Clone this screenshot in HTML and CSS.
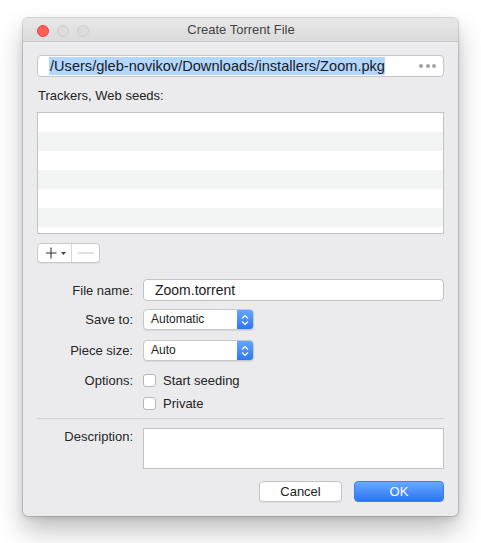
FILE: index.html
```html
<!DOCTYPE html>
<html>
<head>
<meta charset="utf-8">
<link rel="stylesheet" href="styles.css">
</head>
<body>
<div class="window">
  <div class="titlebar">
    <div class="lights">
      <span class="light red"></span>
      <span class="light"></span>
      <span class="light"></span>
    </div>
    <div class="title">Create Torrent File</div>
  </div>
  <div class="content">
    <div class="pathfield">
      <span class="sel">/Users/gleb-novikov/Downloads/installers/Zoom.pkg</span>
      <span class="dots"><i></i><i></i><i></i></span>
    </div>
    <div class="section-label">Trackers, Web seeds:</div>
    <div class="list">
      <div class="row"></div><div class="row alt"></div>
      <div class="row"></div><div class="row alt"></div>
      <div class="row"></div><div class="row alt"></div>
      <div class="row"></div>
    </div>
    <div class="segbtn">
      <span class="seg plus">
        <svg width="14" height="12" viewBox="0 0 14 12"><path d="M5 0.5V11.5M0 6H10.5" stroke="#333" stroke-width="1.1" fill="none"/></svg>
        <svg width="5" height="3" viewBox="0 0 5 3" class="tri"><path d="M0 0H5L2.5 3Z" fill="#444"/></svg>
      </span>
      <span class="seg minus">
        <svg width="16" height="2" viewBox="0 0 16 2"><path d="M0 1H16" stroke="#c4c4c4" stroke-width="1"/></svg>
      </span>
    </div>

    <div class="form">
      <div class="frow r-name">
        <label class="lbl">File name:</label>
        <div class="textfield">Zoom.torrent</div>
      </div>
      <div class="frow r-save">
        <label class="lbl">Save to:</label>
        <div class="popup"><span class="ptext">Automatic</span><span class="pbtn"><svg width="8" height="12" viewBox="0 0 8 12"><path d="M1 4.5L4 1.5L7 4.5M1 7.5L4 10.5L7 7.5" stroke="#fff" stroke-width="1.2" fill="none"/></svg></span></div>
      </div>
      <div class="frow r-piece">
        <label class="lbl">Piece size:</label>
        <div class="popup"><span class="ptext">Auto</span><span class="pbtn"><svg width="8" height="12" viewBox="0 0 8 12"><path d="M1 4.5L4 1.5L7 4.5M1 7.5L4 10.5L7 7.5" stroke="#fff" stroke-width="1.2" fill="none"/></svg></span></div>
      </div>
      <div class="frow r-opt">
        <label class="lbl">Options:</label>
        <div class="check"><span class="box"></span><span>Start seeding</span></div>
      </div>
      <div class="frow r-priv">
        <span class="lbl"></span>
        <div class="check"><span class="box"></span><span>Private</span></div>
      </div>
      <div class="sep"></div>
      <div class="frow r-desc">
        <label class="lbl desc-lbl">Description:</label>
        <div class="textarea"></div>
      </div>
    </div>

    <div class="buttons">
      <button class="btn cancel">Cancel</button>
      <button class="btn ok">OK</button>
    </div>
  </div>
</div>
</body>
</html>
```
FILE: styles.css
```css
html, body {
  margin: 0;
  padding: 0;
  background: #ffffff;
}
body {
  font-family: "Liberation Sans", Arial, sans-serif;
  font-size: 13px;
  color: #222222;
  padding: 18px 0 30px 23px;
}
.window {
  width: 435px;
  height: 498px;
  box-sizing: border-box;
  background: #ebebed;
  border-radius: 5px;
  box-shadow: 0 0 0 1px rgba(0,0,0,0.13), 0 14px 26px rgba(0,0,0,0.26), 0 2px 6px rgba(0,0,0,0.1);
  overflow: hidden;
  display: flex;
  flex-direction: column;
}
.titlebar {
  height: 24px;
  box-sizing: border-box;
  background: linear-gradient(#e9e8e9, #dcdbdc);
  border-bottom: 1px solid #c9c9c9;
  display: flex;
  align-items: center;
  position: relative;
}
.lights {
  display: flex;
  gap: 8px;
  padding-left: 14px;
  position: absolute;
  left: 0;
  top: 7px;
}
.light {
  width: 12px;
  height: 12px;
  box-sizing: border-box;
  border-radius: 50%;
  border: 1px solid #d0d0d0;
  background: #dcdcdc;
}
.light.red {
  background: #fd5e57;
  border-color: #e64a43;
}
.title {
  flex: 1;
  text-align: center;
  color: #444;
  padding-left: 1px;
  line-height: 23px;
}
.content {
  padding: 13px 14px 0 14px;
  display: flex;
  flex-direction: column;
}
.pathfield {
  height: 22px;
  box-sizing: border-box;
  background: #fff;
  border: 1px solid #c5c5c7;
  border-radius: 4px;
  display: flex;
  align-items: center;
  padding-left: 11px;
  padding-right: 7px;
}
.sel {
  background: #b3d7ff;
  line-height: 18px;
  font-size: 14.6px;
  padding: 0 0 0 1px;
  color: #1a1a1a;
}
.dots {
  margin-left: auto;
  display: flex;
  gap: 2.5px;
}
.dots i {
  width: 4px;
  height: 4px;
  border-radius: 50%;
  background: #a3a3a3;
}
.section-label {
  margin-top: 11px;
  line-height: 16px;
  padding-left: 1px;
}
.list {
  margin-top: 8px;
  height: 122px;
  box-sizing: border-box;
  border: 1px solid #c2c2c2;
  background: #fff;
  overflow: hidden;
}
.row {
  height: 19px;
  background: #ffffff;
}
.row.alt {
  background: #f3f4f4;
}
.segbtn {
  margin-top: 9px;
  width: 63px;
  height: 20px;
  box-sizing: border-box;
  display: flex;
  background: #fff;
  border: 1px solid #c9c9c9;
  border-radius: 4px;
  box-shadow: 0 1px 0 rgba(0,0,0,0.05);
}
.seg {
  display: flex;
  align-items: center;
  justify-content: center;
}
.seg.plus {
  width: 34px;
  border-right: 1px solid #d6d6d6;
  gap: 1px;
  padding-left: 2px;
  box-sizing: border-box;
}
.seg.plus .tri {
  margin-top: 1px;
}
.seg.minus {
  flex: 1;
}
.form {
  margin-top: 16px;
  display: flex;
  flex-direction: column;
}
.frow {
  display: flex;
  align-items: center;
}
.lbl {
  width: 96px;
  text-align: right;
  margin-right: 10px;
  flex-shrink: 0;
  color: #262626;
}
.textfield {
  flex: 1;
  height: 22px;
  box-sizing: border-box;
  background: #fff;
  border: 1px solid #c2c2c4;
  border-radius: 4px;
  padding-left: 11px;
  line-height: 20px;
  font-size: 14px;
  color: #1a1a1a;
}
.r-save { margin-top: 8px; }
.r-piece { margin-top: 10px; }
.popup {
  width: 111px;
  height: 21px;
  box-sizing: border-box;
  display: flex;
  background: #fff;
  border: 1px solid #c8c8c8;
  border-radius: 4px;
  overflow: hidden;
  box-shadow: 0 1px 1px rgba(0,0,0,0.08);
}
.ptext {
  flex: 1;
  padding-left: 7px;
  line-height: 19px;
  font-size: 12px;
  color: #222;
}
.pbtn {
  width: 16px;
  background: linear-gradient(#64a7fd, #2e76f7);
  display: flex;
  align-items: center;
  justify-content: center;
}
.r-opt { margin-top: 10px; height: 19px; }
.r-priv { margin-top: 4px; height: 19px; }
.check {
  display: flex;
  align-items: center;
  gap: 7px;
}
.box {
  width: 13px;
  height: 13px;
  box-sizing: border-box;
  background: #fff;
  border: 1px solid #b8b8b8;
  border-radius: 3px;
}
.sep {
  margin-top: 5px;
  height: 1px;
  background: #d3d3d3;
}
.r-desc {
  margin-top: 9px;
  align-items: flex-start;
}
.desc-lbl {
  line-height: 16px;
  margin-top: 1px;
}
.textarea {
  flex: 1;
  height: 41px;
  box-sizing: border-box;
  background: #fff;
  border: 1px solid #c2c2c4;
}
.buttons {
  margin-top: 12px;
  display: flex;
  justify-content: flex-end;
  gap: 12px;
}
.btn {
  font-family: "Liberation Sans", Arial, sans-serif;
  font-size: 13px;
  height: 21px;
  box-sizing: border-box;
  border-radius: 4px;
  padding: 0;
  line-height: 19px;
}
.cancel {
  width: 83px;
  background: #fff;
  border: 1px solid #c4c4c4;
  color: #222;
  box-shadow: 0 1px 0 rgba(0,0,0,0.05);
}
.ok {
  width: 90px;
  background: linear-gradient(#6aa9fc, #2b74f6);
  border: 1px solid #3a7ef0;
  color: #fff;
}
```
